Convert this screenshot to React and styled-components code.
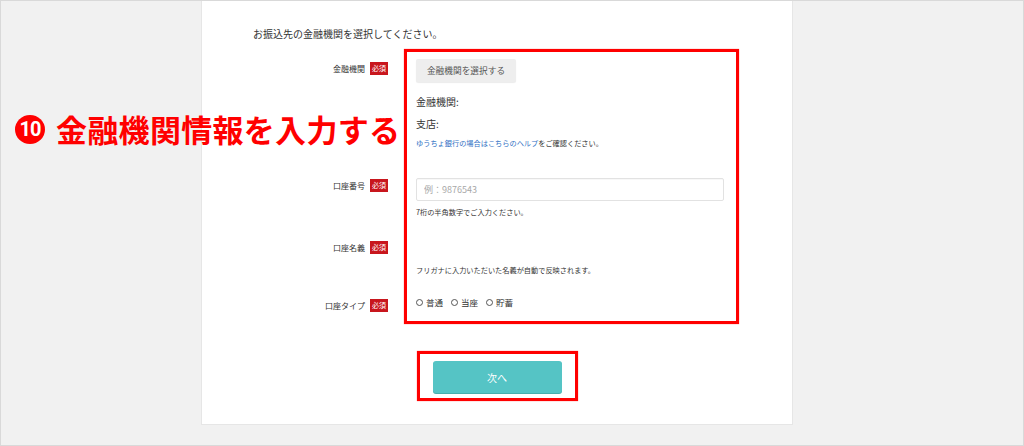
import React from "react";
import styled, { createGlobalStyle } from "styled-components";

const GlobalStyle = createGlobalStyle`
  html, body {
    margin: 0;
    padding: 0;
    background: #f1f1f1;
  }
  body {
    font-family: "Noto Sans CJK JP", "Noto Sans", sans-serif;
    color: #333;
  }
  * {
    box-sizing: border-box;
  }
`;

const Page = styled.div`
  position: relative;
  width: 1024px;
  height: 446px;
  background: #f1f1f1;
  border: 1px solid #d9d9d9;
  overflow: hidden;
`;

const Card = styled.main`
  margin-left: 200px;
  width: 592px;
  height: 424px;
  background: #fff;
  border: 1px solid #e6e6e6;
  border-top: none;
  padding: 27px 0 0 51px;
`;

const Intro = styled.p`
  margin: 0;
  font-size: 10px;
  line-height: 12px;
  color: #333;
`;

const FormGrid = styled.div`
  display: grid;
  grid-template-columns: 135px 335px;
  grid-template-rows: 117px 60px 56px 42px;
  column-gap: 16px;
  margin-top: 9px;
`;

const Label = styled.div`
  grid-column: 1;
  grid-row: ${(p) => p.$row};
  display: flex;
  justify-content: flex-end;
  align-items: flex-start;
  gap: 5px;
  padding-top: ${(p) => p.$offset}px;
  font-size: 8px;
  line-height: 13px;
  color: #333;
`;

const Required = styled.span`
  display: inline-flex;
  align-items: center;
  justify-content: center;
  width: 18px;
  height: 13px;
  background: #c8161d;
  color: #fff;
  font-size: 7px;
  line-height: 1;
`;

const Field = styled.div`
  grid-column: 2;
  grid-row: ${(p) => p.$row};
  display: flex;
  flex-direction: column;
  align-items: flex-start;
  padding: ${(p) => p.$top}px 15px 0 12px;
`;

const Highlight = styled.div`
  grid-column: 2;
  grid-row: 1 / span 4;
  border: 3px solid #ff0000;
  box-shadow: 0 0 1px rgba(255, 0, 0, 0.6);
  pointer-events: none;
`;

const SelectButton = styled.button`
  width: 100px;
  height: 23px;
  border: none;
  border-radius: 2px;
  background: #eeeeee;
  box-shadow: 0 1px 1px rgba(0, 0, 0, 0.08);
  font-family: inherit;
  font-size: 8.7px;
  color: #555;
  padding: 0;
`;

const Info = styled.div`
  margin-top: ${(p) => p.$mt}px;
  font-size: 10px;
  line-height: 16px;
  color: #333;
`;

const Small = styled.div`
  margin-top: ${(p) => p.$mt}px;
  font-size: 7.2px;
  line-height: 12px;
  color: #333;
  white-space: nowrap;
`;

const Link = styled.a`
  color: #2f70c4;
  text-decoration: none;
`;

const Input = styled.input`
  width: 100%;
  height: 23px;
  margin-top: 12px;
  border: 1px solid #e2e2e2;
  border-radius: 2px;
  box-shadow: inset 0 1px 1px rgba(0, 0, 0, 0.03);
  padding: 0 7px;
  font-family: inherit;
  font-size: 9px;
  color: #333;
  &::placeholder {
    color: #a8a8a8;
  }
`;

const Radios = styled.div`
  display: flex;
  align-items: center;
  gap: 8px;
  font-size: 8.5px;
  line-height: 14px;
  color: #333;
`;

const RadioItem = styled.label`
  display: flex;
  align-items: center;
  gap: 3px;
`;

const Circle = styled.span`
  width: 7px;
  height: 7px;
  border: 1px solid #555;
  border-radius: 50%;
`;

const NextArea = styled.div`
  display: flex;
  justify-content: center;
  margin: 27px 0 0 -51px;
`;

const NextFrame = styled.div`
  border: 3px solid #ff0000;
  box-shadow: 0 0 1px rgba(255, 0, 0, 0.6);
  padding: 7px 13px 5px;
`;

const NextButton = styled.button`
  width: 129px;
  height: 32px;
  border: none;
  border-radius: 3px;
  background: #55c4c5;
  box-shadow: 0 1px 0 #48adad;
  color: #fff;
  font-family: inherit;
  font-size: 10px;
  padding: 0;
`;

const Callout = styled.div`
  position: absolute;
  left: 14px;
  top: 108px;
  display: flex;
  align-items: center;
  gap: 11px;
  color: #ff0000;
  font-weight: 700;
  font-size: 31px;
  line-height: 40px;
  letter-spacing: 0.3px;
  white-space: nowrap;
`;

const Number = styled.span`
  display: inline-flex;
  align-items: center;
  justify-content: center;
  width: 30px;
  height: 29px;
  border-radius: 50%;
  background: #ff0000;
  color: #fff;
  font-family: "Roboto", "Liberation Sans", sans-serif;
  font-size: 20px;
  font-weight: 700;
  letter-spacing: -1px;
`;

export default function App() {
  return (
    <>
      <GlobalStyle />
      <Page>
        <Card>
          <Intro>お振込先の金融機関を選択してください。</Intro>
          <FormGrid>
            <Label $row={1} $offset={13}>
              金融機関<Required>必須</Required>
            </Label>
            <Field $row={1} $top={10}>
              <SelectButton>金融機関を選択する</SelectButton>
              <Info $mt={12}>金融機関:</Info>
              <Info $mt={6}>支店:</Info>
              <Small $mt={5}>
                <Link href="#">ゆうちょ銀行の場合はこちらのヘルプ</Link>をご確認ください。
              </Small>
            </Field>

            <Label $row={2} $offset={13}>
              口座番号<Required>必須</Required>
            </Label>
            <Field $row={2} $top={0}>
              <Input placeholder="例：9876543" />
              <Small $mt={5}>7桁の半角数字でご入力ください。</Small>
            </Field>

            <Label $row={3} $offset={15}>
              口座名義<Required>必須</Required>
            </Label>
            <Field $row={3} $top={38}>
              <Small $mt={0}>フリガナに入力いただいた名義が自動で反映されます。</Small>
            </Field>

            <Label $row={4} $offset={17}>
              口座タイプ<Required>必須</Required>
            </Label>
            <Field $row={4} $top={13}>
              <Radios>
                <RadioItem>
                  <Circle />
                  普通
                </RadioItem>
                <RadioItem>
                  <Circle />
                  当座
                </RadioItem>
                <RadioItem>
                  <Circle />
                  貯蓄
                </RadioItem>
              </Radios>
            </Field>

            <Highlight />
          </FormGrid>
          <NextArea>
            <NextFrame>
              <NextButton>次へ</NextButton>
            </NextFrame>
          </NextArea>
        </Card>
        <Callout>
          <Number>10</Number>
          金融機関情報を入力する
        </Callout>
      </Page>
    </>
  );
}
